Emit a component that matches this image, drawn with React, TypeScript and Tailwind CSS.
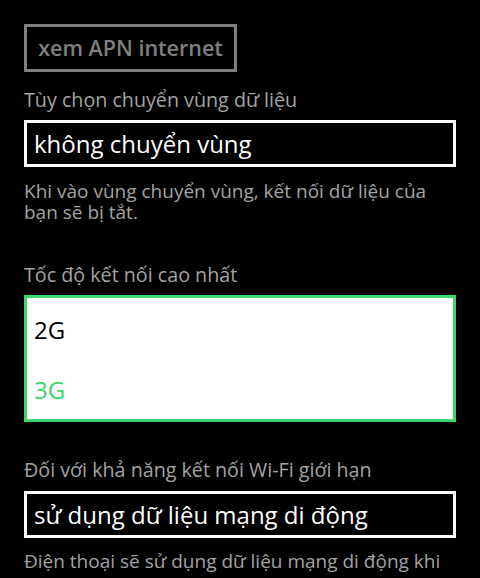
const green = "#3cd46c";

function Label({ children }: { children: React.ReactNode }) {
  return <div className="text-[19.7px] leading-[22px] text-[#a3a3a3]">{children}</div>;
}

function Field({ value }: { value: string }) {
  return (
    <div className="flex h-[47px] items-center border-[3px] border-white px-[7px] text-[24px] text-white">
      {value}
    </div>
  );
}

export default function App() {
  return (
    <div
      className="h-[578px] w-[480px] overflow-hidden bg-black px-[24px] pt-[24px]"
      style={{ fontFamily: '"Open Sans", "Noto Sans", sans-serif' }}
    >
      <button className="flex h-[48px] w-[213px] items-center justify-center border-[3px] border-[#7f7f7f] text-[21.5px] font-semibold text-[#7f7f7f]">
        xem APN internet
      </button>

      <div className="mt-[17px]">
        <Label>Tùy chọn chuyển vùng dữ liệu</Label>
      </div>
      <div className="mt-[9px]">
        <Field value="không chuyển vùng" />
      </div>
      <div className="mt-[14px] text-[19px] leading-[21px] text-[#a3a3a3]">
        Khi vào vùng chuyển vùng, kết nối dữ liệu của bạn sẽ bị tắt.
      </div>

      <div className="mt-[41px]">
        <Label>Tốc độ kết nối cao nhất</Label>
      </div>
      <div className="mt-[9px] flex h-[127px] flex-col border-[3px] border-[#3cd46c] bg-white px-[7px] text-[24px]">
        <div className="flex h-[60px] items-center pt-[4px] text-black">2G</div>
        <div className="flex h-[60px] items-center pt-[4px]" style={{ color: green }}>
          3G
        </div>
      </div>

      <div className="mt-[37px]">
        <Label>Đối với khả năng kết nối Wi-Fi giới hạn</Label>
      </div>
      <div className="mt-[10px]">
        <Field value="sử dụng dữ liệu mạng di động" />
      </div>
      <div className="mt-[13px] whitespace-nowrap text-[19px] leading-[21px] text-[#a3a3a3]">
        Điện thoại sẽ sử dụng dữ liệu mạng di động khi
      </div>
    </div>
  );
}
